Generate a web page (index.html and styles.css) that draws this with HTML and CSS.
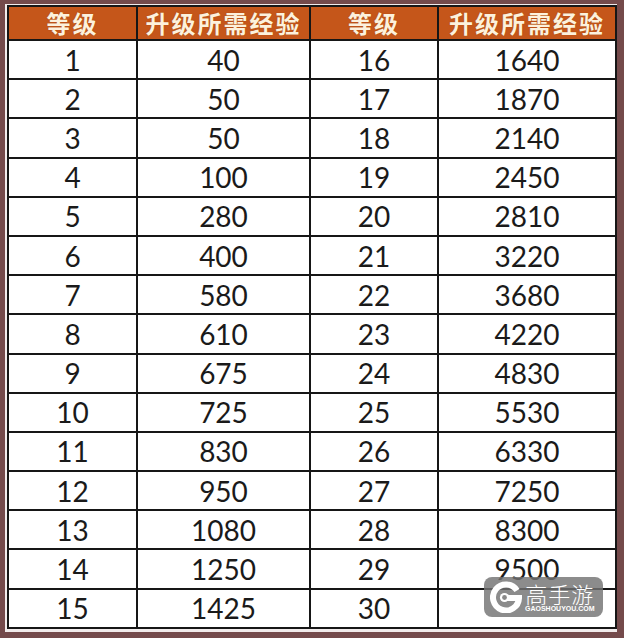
FILE: index.html
```html
<!DOCTYPE html>
<html lang="zh">
<head>
<meta charset="utf-8">
<link rel="stylesheet" href="styles.css">
</head>
<body>
<div class="frame">
  <table class="exp">
    <colgroup>
      <col class="c1"><col class="c2"><col class="c3"><col class="c4">
    </colgroup>
    <thead>
      <tr><th>等级</th><th>升级所需经验</th><th>等级</th><th>升级所需经验</th></tr>
    </thead>
    <tbody>
      <tr><td>1</td><td>40</td><td>16</td><td>1640</td></tr>
      <tr><td>2</td><td>50</td><td>17</td><td>1870</td></tr>
      <tr><td>3</td><td>50</td><td>18</td><td>2140</td></tr>
      <tr><td>4</td><td>100</td><td>19</td><td>2450</td></tr>
      <tr><td>5</td><td>280</td><td>20</td><td>2810</td></tr>
      <tr><td>6</td><td>400</td><td>21</td><td>3220</td></tr>
      <tr><td>7</td><td>580</td><td>22</td><td>3680</td></tr>
      <tr><td>8</td><td>610</td><td>23</td><td>4220</td></tr>
      <tr><td>9</td><td>675</td><td>24</td><td>4830</td></tr>
      <tr><td>10</td><td>725</td><td>25</td><td>5530</td></tr>
      <tr><td>11</td><td>830</td><td>26</td><td>6330</td></tr>
      <tr><td>12</td><td>950</td><td>27</td><td>7250</td></tr>
      <tr><td>13</td><td>1080</td><td>28</td><td>8300</td></tr>
      <tr><td>14</td><td>1250</td><td>29</td><td>9500</td></tr>
      <tr><td>15</td><td>1425</td><td>30</td><td></td></tr>
    </tbody>
  </table>
  <div class="watermark">
    <svg class="logo" width="32" height="32" viewBox="0 0 32 32">
      <path d="M27 9.5 A13 13 0 1 0 29 17 L17 17" fill="none" stroke="#fff" stroke-width="6" stroke-linecap="butt"/>
      <circle cx="14.5" cy="16.5" r="4.6" fill="#fff"/>
      <circle cx="14.5" cy="16.5" r="2.4" fill="#8a8a8a"/>
    </svg>
    <div class="brand">
      <span class="cn">高手游</span>
      <span class="en">GAOSHOUYOU.COM</span>
    </div>
  </div>
</div>
</body>
</html>
```
FILE: styles.css
```css
html, body {
  margin: 0;
  padding: 0;
  background: #744a4b;
}
.frame {
  position: relative;
  width: 608px;
  height: 624px;
  border-style: solid;
  border-color: #744a4b;
  border-width: 4px 7px 6px 5px;
  padding: 1px 2px 3px 2px;
  background: #f1ebeb;
}
.exp {
  width: 608px;
  height: 624px;
  border-collapse: collapse;
  table-layout: fixed;
  border: 2px solid #161616;
  background: #fff;
}
.c1 { width: 129px; }
.c2 { width: 173px; }
.c3 { width: 128px; }
.c4 { width: 178px; }
.exp th {
  height: 32px;
  background: #c5561a;
  color: #fdf1dc;
  font-family: "Noto Sans CJK SC", sans-serif;
  font-weight: 700;
  font-size: 24px;
  letter-spacing: 2px;
  padding: 0;
  border: 2px solid #161616;
  text-shadow: 0 0 1px rgba(120,50,10,0.6);
  line-height: 1;
}
.exp td {
  border: 2px solid #161616;
  padding: 0;
  text-align: center;
  font-family: "Lato", "Open Sans", sans-serif;
  font-size: 28px;
  color: #1a1a1a;
  line-height: 1;
}
.watermark {
  position: absolute;
  left: 479px;
  top: 573px;
  width: 119px;
  height: 40px;
  border-radius: 8px;
  background: rgba(115,115,115,0.82);
  display: flex;
  align-items: center;
  gap: 3px;
  padding-left: 6px;
  box-sizing: border-box;
}
.logo { flex: none; }
.brand {
  display: flex;
  flex-direction: column;
  align-items: center;
  color: #fff;
}
.cn {
  font-family: "Noto Sans CJK SC", sans-serif;
  font-weight: 300;
  font-size: 22px;
  line-height: 24px;
  letter-spacing: 1px;
}
.en {
  font-family: "Liberation Sans", sans-serif;
  font-weight: 700;
  font-size: 7px;
  line-height: 8px;
}
```
